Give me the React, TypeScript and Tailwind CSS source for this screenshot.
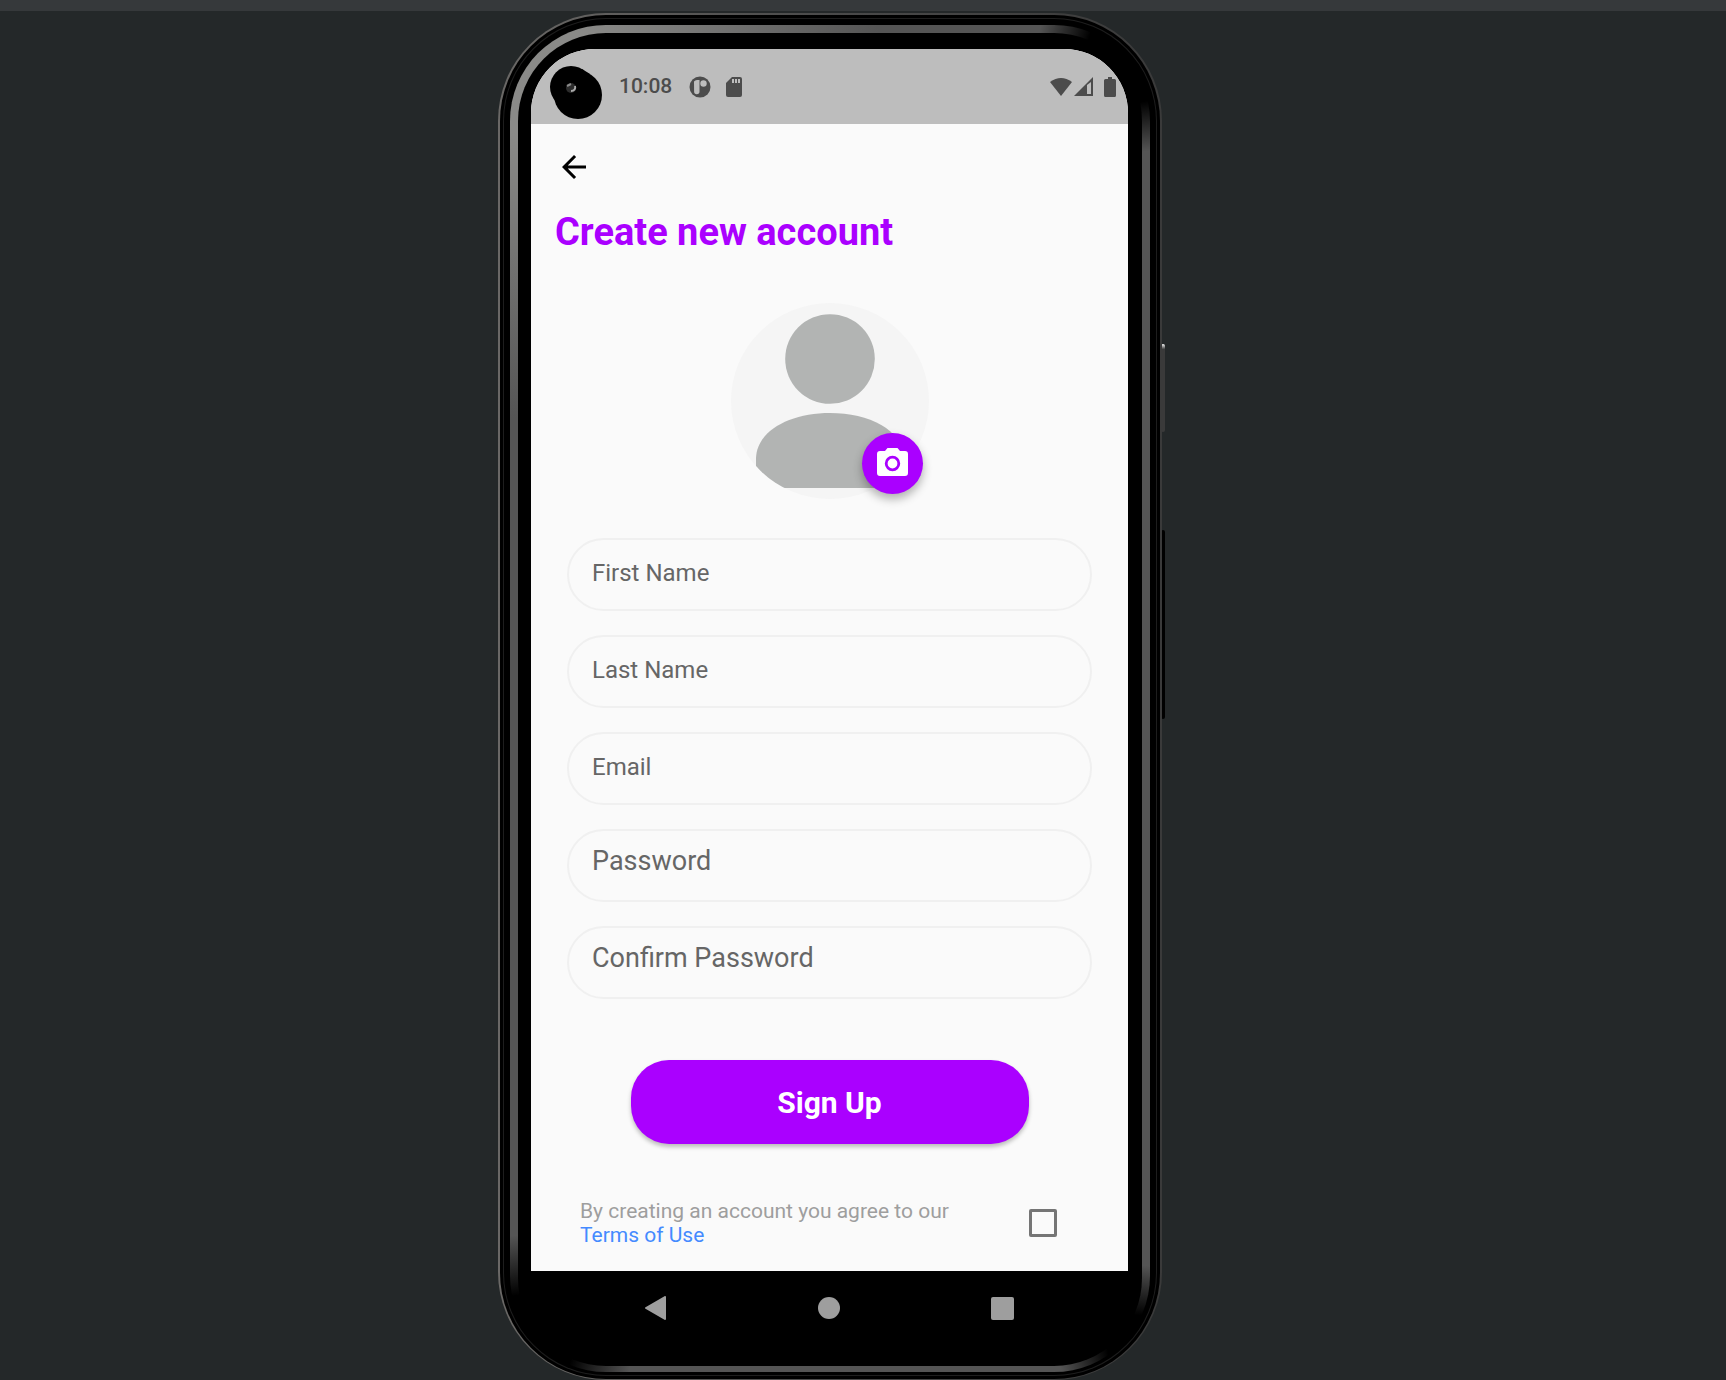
import { useState } from "react";

type FieldProps = { id: string; label: string; type: string; large?: boolean };

function Field({ id, label, type, large }: FieldProps) {
  return (
    <div className="h-[73px] rounded-full border-2 border-[#f0f0f0]">
      <input
        id={id}
        type={type}
        aria-label={label}
        placeholder={label}
        className={
          large
            ? "h-[60px] w-full rounded-full bg-transparent px-[23px] text-[27px] text-[#666666] outline-none placeholder:text-[#666666]"
            : "h-[66px] w-full rounded-full bg-transparent px-[23px] text-[24px] text-[#666666] outline-none placeholder:text-[#666666]"
        }
      />
    </div>
  );
}

function StatusBar() {
  return (
    <header className="flex h-[75px] items-center bg-[#bdbdbd] pl-[18px] pr-[12px] text-[#4c4c4c]">
      <svg width="54" height="56" viewBox="0 0 54 56" className="mt-[10px]" aria-hidden="true">
        <circle cx="22" cy="23" r="21" fill="#000" />
        <circle cx="29" cy="31" r="24" fill="#000" />
        <path d="M33 5L41 10L30 20Z" fill="#000" />
        <circle cx="22" cy="24" r="5" fill="#2c2c2c" />
        <path d="M18 22l4-2" stroke="#8a8a8a" strokeWidth="2" />
        <path d="M26 22c1 3-1 5-4 5" stroke="#aaa" strokeWidth="2" fill="none" />
      </svg>
      <time className="ml-[16px] text-[21px] font-medium leading-none">10:08</time>
      <svg width="22" height="22" viewBox="0 0 22 22" className="ml-[17px]" aria-hidden="true">
        <circle cx="11" cy="11" r="10.500" fill="currentColor" />
        <path d="M5 5.500Q6 4 8 4h2.500v11.500a2.700 2.700 0 0 1-5.400 0z" fill="#bdbdbd" />
        <circle cx="14.500" cy="7.500" r="3.200" fill="#bdbdbd" />
      </svg>
      <svg width="16" height="20" viewBox="0 0 16 20" className="ml-[15px]" aria-hidden="true">
        <path d="M6 0h8a2 2 0 0 1 2 2v16a2 2 0 0 1-2 2H2a2 2 0 0 1-2-2V6z" fill="currentColor" />
        <path d="M6 2h2v4H6zM9 2h2v4H9zM12 2h2v4h-2z" fill="#bdbdbd" />
      </svg>
      <svg width="22" height="18" viewBox="0 0 22 18" className="ml-auto" aria-hidden="true">
        <path d="M0 4Q11-4 22 4L11 18z" fill="currentColor" />
      </svg>
      <svg width="19" height="19" viewBox="0 0 19 19" className="ml-[2px]" aria-hidden="true">
        <path d="M19 0v19H0zM13 8v9h4V5z" fillRule="evenodd" fill="currentColor" />
      </svg>
      <svg width="12" height="20" viewBox="0 0 12 20" className="ml-[11px]" aria-hidden="true">
        <path d="M4 0h4v2h2.500A1.500 1.500 0 0 1 12 3.500v15a1.500 1.500 0 0 1-1.500 1.500h-9A1.500 1.500 0 0 1 0 18.500v-15A1.500 1.500 0 0 1 1.500 2H4z" fill="currentColor" />
      </svg>
    </header>
  );
}

function Avatar() {
  return (
    <div className="relative mx-auto mt-[49px] h-[196px] w-[198px]">
      <svg viewBox="0 0 198 196" className="size-full" role="img" aria-label="Profile picture">
        <defs>
          <clipPath id="avatar-circle">
            <ellipse cx="99" cy="98" rx="99" ry="98" />
          </clipPath>
        </defs>
        <ellipse cx="99" cy="98" rx="99" ry="98" fill="#f5f5f5" />
        <g fill="#b2b4b3" clipPath="url(#avatar-circle)">
          <circle cx="99" cy="56" r="44.800" />
          <path d="M25 185V155C26 127 60 110 99 110s73 17 74 45v30z" />
        </g>
      </svg>
      <button
        type="button"
        aria-label="Choose a photo"
        className="absolute bottom-[5px] right-[6px] flex size-[61px] items-center justify-center rounded-full bg-[#aa00ff] shadow-[0_5px_10px_rgba(0,0,0,0.3)]"
      >
        <svg width="31" height="28" viewBox="0 0 31 28" className="mb-[3px]" aria-hidden="true">
          <path
            d="M10.500 0h10l2.500 3h5a3 3 0 0 1 3 3v19a3 3 0 0 1-3 3H3a3 3 0 0 1-3-3V6a3 3 0 0 1 3-3h5z"
            fill="#fff"
          />
          <circle cx="15.500" cy="15.500" r="6.300" fill="#fff" stroke="#aa00ff" strokeWidth="2.800" />
        </svg>
      </button>
    </div>
  );
}

function SignUpForm() {
  const [agreed, setAgreed] = useState(false);
  return (
    <form className="mt-[39px] flex flex-col" onSubmit={(e) => e.preventDefault()}>
      <div className="flex flex-col gap-6 px-[36px]">
        <Field id="first-name" label="First Name" type="text" />
        <Field id="last-name" label="Last Name" type="text" />
        <Field id="email" label="Email" type="email" />
        <Field id="password" label="Password" type="password" large />
        <Field id="confirm-password" label="Confirm Password" type="password" large />
      </div>
      <button
        type="submit"
        className="mx-auto mt-[61px] h-[84px] w-2/3 rounded-[38px] bg-[#aa00ff] text-[30px] font-bold text-white shadow-[0_3px_4px_rgba(0,0,0,0.25)]"
      >
        Sign Up
      </button>
      <div className="mt-[55px] flex items-center justify-between pl-[49px] pr-[71px]">
        <label htmlFor="agree" className="text-[21px] leading-6 text-[#9e9e9e]">
          By creating an account you agree to our
          <br />
          <a href="#terms" className="text-[#448aff]">
            Terms of Use
          </a>
        </label>
        <input
          id="agree"
          type="checkbox"
          checked={agreed}
          onChange={(e) => setAgreed(e.target.checked)}
          className="size-7 appearance-none rounded-[2px] border-[3px] border-[#757575] checked:bg-[#aa00ff]"
        />
      </div>
    </form>
  );
}

function NavBar() {
  return (
    <nav className="flex h-[74px] items-center justify-between px-[114px]" aria-label="System">
      <button type="button" aria-label="Back">
        <svg width="22" height="24" viewBox="0 0 22 24" aria-hidden="true">
          <path d="M20 1v22L1 12z" fill="#9e9e9e" stroke="#9e9e9e" strokeWidth="2" strokeLinejoin="round" />
        </svg>
      </button>
      <button type="button" aria-label="Home" className="size-[22px] rounded-full bg-[#9e9e9e]" />
      <button type="button" aria-label="Recent apps" className="size-[23px] rounded-[2px] bg-[#9e9e9e]" />
    </nav>
  );
}

export default function App() {
  return (
    <div className="min-h-screen overflow-hidden bg-[#242829] font-['Roboto',sans-serif]">
      <div className="h-[11px] bg-[#36393b]" />
      <div className="flex justify-center pr-[66px] pt-[2px]">
        <div className="relative w-full max-w-[664px]">
          <div className="absolute -right-[3px] top-[331px] h-[88px] w-[4px] rounded-full bg-linear-to-b from-white from-0% via-[#3a3a3a] via-6% to-[#3a3a3a]" />
          <div className="absolute -right-[3px] top-[517px] h-[189px] w-[4px] rounded-full bg-black" />
          <div className="relative rounded-[108px] bg-linear-to-r from-[#6a6866] via-[#4a4a4a] to-[#3a3a3a] p-[2px] pb-px">
            <div className="rounded-[106px] bg-black p-[3px]">
              <div className="rounded-[103px] bg-[#1e1e1e] p-px">
                <div className="rounded-[102px] bg-black p-[6px] pb-[3px]">
                  <div className="rounded-[96px] bg-[radial-gradient(circle_at_98%_2%,#000_50px,transparent_100px),radial-gradient(circle_at_2%_98%,#000_50px,transparent_110px),radial-gradient(circle_at_98%_98%,#000_30px,transparent_80px),radial-gradient(circle_at_5%_4%,#8a8a88_60px,#555555_340px)] p-[8px] pb-[6px]">
                    <div className="rounded-[88px] bg-black pb-[21px] pl-[13px] pr-[14px] pt-[16px]">
                      <main className="overflow-hidden rounded-t-[64px] bg-[#fafafa]">
                        <StatusBar />
                        <div className="pb-6 pt-[25px]">
                          <button type="button" aria-label="Go back" className="ml-[25px] block">
                            <svg width="36" height="36" viewBox="0 0 24 24" aria-hidden="true">
                              <path d="M20 11H7.830l5.590-5.590L12 4l-8 8 8 8 1.410-1.410L7.830 13H20z" fill="#000" />
                            </svg>
                          </button>
                          <h1 className="ml-6 mt-[25px] text-[38px] font-bold leading-[44px] text-[#aa00ff]">
                            Create new account
                          </h1>
                          <Avatar />
                          <SignUpForm />
                        </div>
                      </main>
                      <NavBar />
                    </div>
                  </div>
                </div>
              </div>
            </div>
          </div>
        </div>
      </div>
    </div>
  );
}
